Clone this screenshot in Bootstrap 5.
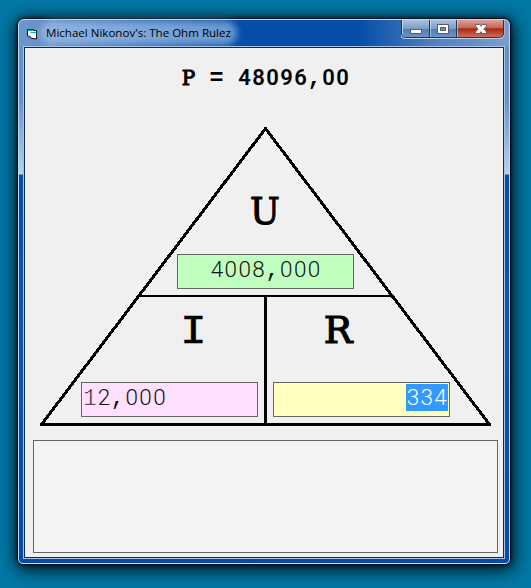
<!DOCTYPE html>
<html lang="en">
<head>
<meta charset="utf-8">
<meta name="viewport" content="width=device-width, initial-scale=1">
<title>Michael Nikonov's: The Ohm Rulez</title>
<link rel="stylesheet" href="https://cdn.jsdelivr.net/npm/bootstrap@5.3.0/dist/css/bootstrap.min.css">
<style>
  body { background: #0078a5; height: 588px; padding: 18px 20px 23px 17px; color: #000; }
  .win { width: 494px; height: 547px; border: 1px solid #020c1c; border-radius: 7px 7px 6px 6px;
    box-shadow: 1px 3px 17px 2px rgba(0,0,0,.85), 0 0 4px rgba(0,0,0,.7); }
  .frame { border: 1px solid #c3d8f0; border-radius: 6px 6px 5px 5px; padding: 0 4px 4px;
    background:
      linear-gradient(90deg, #6f97cd 0, #4f82c4 60px, rgba(0,78,168,0) 210px) 0 0/100% 26px no-repeat,
      linear-gradient(270deg, #7c9dca 0, #5583c1 70px, rgba(0,78,168,0) 150px) 0 0/100% 26px no-repeat,
      linear-gradient(#044ea9, #044ea9) 0 0/100% 26px no-repeat,
      linear-gradient(#6690ca 0, #6892cd 80px, #bad0e9 153px, #c3d7ec 154px, #044fa9 155px, #0c55b0 300px, #044da6 100%); }
  .bar { height: 26px; flex: none; }
  .app-icon { margin: 8px 0 0 3px; }
  .caption { font: 11.55px/12px "Open Sans", "Noto Sans", sans-serif; white-space: nowrap; width: 185px; height: 12px; margin: 7px 0 0 7px;
    background: rgba(180,207,240,.58); box-shadow: 0 0 7px 6px rgba(180,207,240,.58); border-radius: 9px; }
  .client { border: 1px solid #0a2a5c; outline: 1px solid #a9c4e4; background: #f0f0f0; margin: 1px; padding: 16px 5px 4px 8px;
    font-family: "Liberation Mono", "Courier New", monospace; }
  .power { font-size: 23.4px; line-height: 27px; height: 26px; }
  .power .lead-sym { font-family: "DejaVu Serif", serif; font-weight: 400; font-size: 20px; -webkit-text-stroke: 1px #000; display: inline-block; width: 14px; line-height: 20px; }
  /* undotted zeros on the monospaced pitch */
  .power .z { font-family: Roboto, "Liberation Sans", sans-serif; font-weight: 600; font-size: 22px; letter-spacing: 1.4px; padding-left: .7px; margin-right: -.7px; }
  .val .z { font-family: Roboto, "Liberation Sans", sans-serif; font-weight: 300; font-size: 22.5px; letter-spacing: 1.36px; padding-left: .68px; margin-right: -.68px; }
  .one { -webkit-text-stroke: .7px #ffe0ff; }
  .diagram { height: 350px; }
  .lines { left: 0; top: 0; }
  .upper { padding-top: 96px; gap: 18px; }
  .lower { padding-top: 16px; gap: 15px; }
  .cell { gap: 27px; }
  .sym { font-family: "DejaVu Serif", serif; font-size: 38px; line-height: 50px; height: 50px; -webkit-text-stroke: 1.2px #000; }
  .sym span { display: inline-block; transform: scaleX(.93); }
  .sym-i { padding-left: 48px; font-family: "DejaVu Sans Mono", monospace; -webkit-text-stroke-width: .5px; }
  .sym-i span { transform: scaleX(1.15); }
  .sym-r { padding-right: 47px; }
  .sym-r span { transform: none; }
  .val { height: 35px; width: 177px; border: 1px solid #646464; font-size: 23.33px; line-height: 27px; padding: 1px; color: #111; }
  .v-u { background: #c0ffc0; }
  .v-i { background: #ffe0ff; }
  .v-r { background: #ffffc0; }
  .sel { background: #3399ff; color: #fff; height: 27px; width: 42px; line-height: 27px; }
  .memo { border: 1px solid #646464; background: #f4f4f4; width: 465px; height: 113px; }
</style>
<script src="https://cdn.jsdelivr.net/npm/bootstrap@5.3.0/dist/js/bootstrap.bundle.min.js"></script>
</head>
<body class="overflow-hidden">
<main class="win">
  <div class="frame h-100 d-flex flex-column">
    <header class="bar d-flex align-items-start">
      <svg class="app-icon" width="13" height="12" viewBox="26 27 13 12">
        <path d="M27.500 28.500h6l.5 1h2.500v8.500l-6-1-.5-1.500-2.500-.5z" fill="#fff" stroke="#000" stroke-width=".9"/>
        <path d="M28 29.300h6M30.500 31.500h5.500" stroke="#00b4b4" stroke-width="1.200"/>
        <path d="M37.200 35h1.800v2h-1.800z" fill="#8a95a5"/>
      </svg>
      <div class="caption">Michael Nikonov's: The Ohm Rulez</div>
      <svg class="ms-auto" width="104" height="20" viewBox="401 19 104 20">
        <defs>
          <linearGradient id="b" x1="0" y1="0" x2="0" y2="1"><stop offset="0" stop-color="#a9c1df"/><stop offset=".48" stop-color="#7c9cc8"/><stop offset=".5" stop-color="#507cb5"/><stop offset="1" stop-color="#6e97ca"/></linearGradient>
          <linearGradient id="r" x1="0" y1="0" x2="0" y2="1"><stop offset="0" stop-color="#dba59b"/><stop offset=".46" stop-color="#c5624f"/><stop offset=".5" stop-color="#a82610"/><stop offset="1" stop-color="#d07361"/></linearGradient>
        </defs>
        <path d="M401.500 19v14q0 4 4 4h94q4 0 4-4V19" fill="url(#b)" stroke="#bed1ea" stroke-width="2"/>
        <path d="M456.500 19v17.500h43q4 0 4-3.500V19z" fill="url(#r)"/>
        <path d="M401.500 19v14q0 3.500 4 3.500h94q4 0 4-3.500V19M429.500 19v17M456.500 19v17" fill="none" stroke="#1f365b"/>
        <path d="M402.500 19v14M430.500 19v17M457.500 19v17" fill="none" stroke="#fff" stroke-opacity=".45"/>
        <path d="M410.500 28.500h11v4h-11z" fill="#fff" stroke="#545967"/>
        <path d="M437.500 23.500h11v9h-11z" fill="#fff" stroke="#545967"/><path d="M440.500 26.500h5v3h-5z" fill="#6c8fbe" stroke="#545967"/>
        <path d="M475.500 23.500h4l1.500 1.800 1.500-1.800h4v1.500l-2.600 3 2.600 3v1.500h-4l-1.500-1.800-1.500 1.800h-4v-1.500l2.600-3-2.600-3z" fill="#fff" stroke="#545967" stroke-width=".9"/>
      </svg>
    </header>
    <section class="client flex-grow-1">
      <div class="power fw-bold text-center text-nowrap"><span class="lead-sym">P</span> = <span class="z">48096</span>,<span class="z">00</span></div>
      <div class="diagram position-relative">
        <svg class="lines position-absolute" width="464" height="350" viewBox="33 90 464 350" fill="none" stroke="#000" stroke-width="3" stroke-linejoin="round" shape-rendering="crispEdges"><path d="M265.500 128.500L41.500 424.500H489.500ZM265.500 296V424"/><path d="M138 296H392" stroke-width="2"/></svg>
        <div class="upper position-relative d-flex flex-column align-items-center">
          <div class="sym"><span>U</span></div>
          <div class="val v-u text-center"><span class="z">4008</span>,<span class="z">000</span></div>
        </div>
        <div class="lower position-relative d-flex justify-content-center">
          <div class="cell d-flex flex-column">
            <div class="sym sym-i text-center"><span>I</span></div>
            <div class="val v-i"><span class="one">1</span><span class="z">2</span>,<span class="z">000</span></div>
          </div>
          <div class="cell d-flex flex-column">
            <div class="sym sym-r text-center"><span>R</span></div>
            <div class="val v-r d-flex justify-content-end"><div class="sel"><span class="z">334</span></div></div>
          </div>
        </div>
      </div>
      <div class="memo"></div>
    </section>
  </div>
</main>
</body>
</html>
